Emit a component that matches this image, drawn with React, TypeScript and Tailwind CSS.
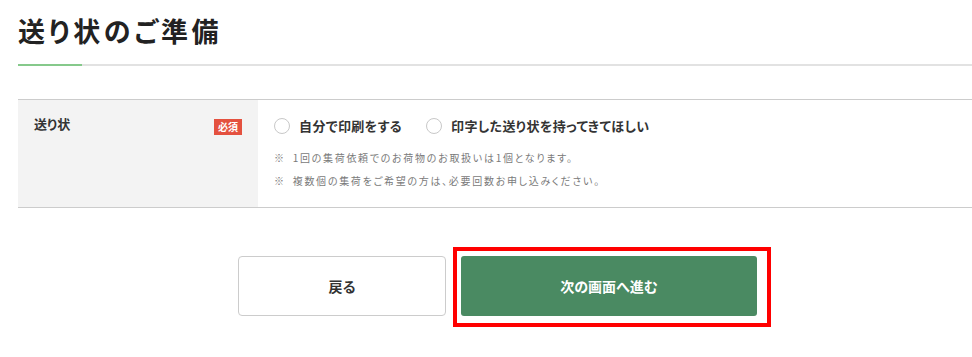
const font = "font-['Noto_Sans_CJK_JP','Noto_Sans',sans-serif] [font-feature-settings:'palt']";

const options = ["自分で印刷をする", "印字した送り状を持ってきてほしい"];

const notes = [
  "1回の集荷依頼でのお荷物のお取扱いは1個となります。",
  "複数個の集荷をご希望の方は、必要回数お申し込みください。",
];

export default function App() {
  return (
    <div className={`${font} w-[972px] h-[357px] overflow-hidden bg-white pl-[18px] text-[#333]`}>
      <h1 className="pt-[16px] text-[27px] leading-[30px] font-bold tracking-[0.13em] text-[#222]">
        送り状のご準備
      </h1>
      <div className="mt-[18px] h-[2px] bg-[#e2e2e2]">
        <div className="h-[2px] w-[64px] bg-[#86c98b]" />
      </div>

      <div className="mt-[33px] flex h-[109px] border-y border-[#cccccc]">
        <div className="flex w-[240px] shrink-0 items-start justify-between bg-[#f3f3f3] pl-[16px] pr-[16px] pt-[14px]">
          <span className="text-[13px] leading-[20px] font-bold">送り状</span>
          <span className="mt-[5px] bg-[#e4513f] px-[4px] text-[10px] leading-[16px] font-bold text-white">
            必須
          </span>
        </div>
        <div className="flex-1 pl-[16px] pt-[14px]">
          <div className="flex h-[24px] items-center gap-[24px]">
            {options.map((o) => (
              <label key={o} className="flex items-center gap-[9px]">
                <span className="h-[16px] w-[16px] rounded-full border border-[#c8c8c8] bg-white" />
                <span className="text-[13px] font-bold tracking-[0.03em] text-[#333]">{o}</span>
              </label>
            ))}
          </div>
          <ul className="mt-[8px]">
            {notes.map((n) => (
              <li key={n} className="flex text-[10px] leading-[23px] tracking-[0.17em] text-[#7a7a7a]">
                <span className="mr-[7px]">※</span>
                {n}
              </li>
            ))}
          </ul>
        </div>
      </div>

      <div className="mt-[39px] ml-[220px] flex items-start">
        <button className="mt-[9px] flex h-[60px] w-[208px] items-center justify-center rounded-[4px] border border-[#cccccc] bg-white text-[14px] font-bold text-[#333]">
          戻る
        </button>
        <div className="ml-[7px] border-4 border-[#ff0000] pt-[5px] pl-[4px] pr-[10px] pb-[7px]">
          <button className="flex h-[60px] w-[296px] items-center justify-center rounded-[3px] bg-[#4a8a62] text-[14px] font-bold text-white">
            次の画面へ進む
          </button>
        </div>
      </div>
    </div>
  );
}
